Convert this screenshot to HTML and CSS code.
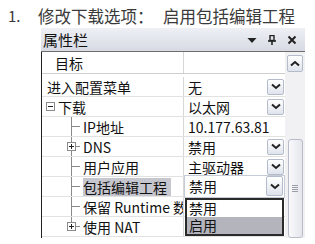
FILE: index.html
```html
<!DOCTYPE html>
<html lang="zh">
<head>
    <meta charset="UTF-8">
    <meta name="viewport" content="width=device-width, initial-scale=1.0">
    <title>属性栏</title>
    <link rel="stylesheet" href="styles.css">
</head>
<body>
    <p class="step"><span class="num">1.</span><span class="what">修改下载选项：</span><span class="how">启用包括编辑工程</span></p>

    <div class="panel">
        <div class="panel-head">
            <span class="panel-title">属性栏</span>
            <span class="head-icons">
                <svg width="10" height="10" viewBox="0 0 10 10"><polygon points="0.5,3 9.5,3 5,8" fill="#222"/></svg>
                <svg width="10" height="10" viewBox="0 0 10 10"><rect x="3" y="0.5" width="4" height="5" fill="none" stroke="#222" stroke-width="1.4"/><line x1="1" y1="6" x2="9" y2="6" stroke="#222" stroke-width="1.6"/><line x1="5" y1="6" x2="5" y2="10" stroke="#222" stroke-width="1.6"/></svg>
                <svg width="10" height="10" viewBox="0 0 10 10"><path d="M1.5 1.5 L8.5 8.5 M8.5 1.5 L1.5 8.5" stroke="#222" stroke-width="2"/></svg>
            </span>
        </div>

        <div class="panel-body">
            <div class="grid">
                <div class="row row-top">
                    <div class="label">目标</div>
                    <div class="value"></div>
                </div>
                <div class="row row-first">
                    <div class="label">进入配置菜单</div>
                    <div class="value">无<span class="drop"><svg width="10" height="7" viewBox="0 0 10 7"><path d="M1 1.5 L5 5 L9 1.5" fill="none" stroke="#222" stroke-width="2"/></svg></span></div>
                </div>
                <div class="row">
                    <div class="label lvl0"><svg class="box" width="9" height="9" viewBox="0 0 9 9"><rect x="0.5" y="0.5" width="8" height="8" fill="#fff" stroke="#8a8a8a"/><line x1="2" y1="4.5" x2="7" y2="4.5" stroke="#222"/></svg>下载</div>
                    <div class="value">以太网<span class="drop"><svg width="10" height="7" viewBox="0 0 10 7"><path d="M1 1.5 L5 5 L9 1.5" fill="none" stroke="#222" stroke-width="2"/></svg></span></div>
                </div>
                <div class="row">
                    <div class="label lvl1"><span class="twig"></span>IP地址</div>
                    <div class="value">10.177.63.81</div>
                </div>
                <div class="row">
                    <div class="label lvl1"><span class="twig twig-box"><svg class="box" width="9" height="9" viewBox="0 0 9 9"><rect x="0.5" y="0.5" width="8" height="8" fill="#fff" stroke="#8a8a8a"/><line x1="2" y1="4.5" x2="7" y2="4.5" stroke="#222"/><line x1="4.5" y1="2" x2="4.5" y2="7" stroke="#222"/></svg></span>DNS</div>
                    <div class="value">禁用<span class="drop"><svg width="10" height="7" viewBox="0 0 10 7"><path d="M1 1.5 L5 5 L9 1.5" fill="none" stroke="#222" stroke-width="2"/></svg></span></div>
                </div>
                <div class="row">
                    <div class="label lvl1"><span class="twig"></span>用户应用</div>
                    <div class="value">主驱动器<span class="drop"><svg width="10" height="7" viewBox="0 0 10 7"><path d="M1 1.5 L5 5 L9 1.5" fill="none" stroke="#222" stroke-width="2"/></svg></span></div>
                </div>
                <div class="row">
                    <div class="label lvl1"><span class="twig"></span><span class="selected">包括编辑工程</span></div>
                    <div class="value combo">
                        <div class="combo-box">禁用<span class="drop drop-big"><svg width="10" height="7" viewBox="0 0 10 7"><path d="M1 1.5 L5 5 L9 1.5" fill="none" stroke="#222" stroke-width="2"/></svg></span></div>
                        <div class="combo-list">
                            <div class="option">禁用</div>
                            <div class="option picked">启用</div>
                        </div>
                    </div>
                </div>
                <div class="row">
                    <div class="label lvl1"><span class="twig"></span>保留 Runtime 数</div>
                    <div class="value"></div>
                </div>
                <div class="row">
                    <div class="label lvl1"><span class="twig twig-box twig-last"><svg class="box" width="9" height="9" viewBox="0 0 9 9"><rect x="0.5" y="0.5" width="8" height="8" fill="#fff" stroke="#8a8a8a"/><line x1="2" y1="4.5" x2="7" y2="4.5" stroke="#222"/><line x1="4.5" y1="2" x2="4.5" y2="7" stroke="#222"/></svg></span>使用 NAT</div>
                    <div class="value"></div>
                </div>
            </div>

            <div class="scrollbar">
                <div class="sb-btn"><svg width="10" height="7" viewBox="0 0 10 7"><path d="M1 5.5 L5 2 L9 5.5" fill="none" stroke="#222" stroke-width="2"/></svg></div>
                <div class="sb-track"></div>
                <div class="sb-thumb"><span class="grip"></span></div>
            </div>
        </div>
    </div>
</body>
</html>
```

FILE: styles.css
```css
body {
    margin: 0;
    background: #ffffff;
    font-family: "Noto Sans CJK SC", "Noto Sans", sans-serif;
    color: #111;
}
.step {
    margin: 0;
    padding: 3px 0 0 8px;
    height: 25px;
    display: flex;
    align-items: center;
    font-size: 16.5px;
    line-height: 20px;
    color: #3a3a3a;
}
.num {
    width: 30px;
    font-size: 15px;
}
.what {
    width: 125px;
}
.panel {
    margin-left: 41px;
    width: 264px;
}
.panel-head {
    height: 24px;
    box-sizing: border-box;
    display: flex;
    align-items: center;
    justify-content: space-between;
    padding: 0 8px 0 2px;
    background: linear-gradient(#eef0f5, #d7dae3);
    border-bottom: 1px solid #6e6e6e;
}
.panel-title {
    font-size: 15px;
    line-height: 18px;
    color: #111;
}
.head-icons {
    display: flex;
    gap: 10px;
    align-items: center;
}
.head-icons svg {
    display: block;
}
.panel-body {
    display: flex;
    height: 186px;
}
.grid {
    width: 244px;
    border-left: 1px solid #222;
    box-sizing: border-box;
    font-size: 14px;
}
.row {
    display: flex;
    height: 20px;
    box-sizing: border-box;
    border-bottom: 1px solid #e2e2e2;
}
.row-top {
    height: 22px;
    border-bottom: 1px solid #cfcfcf;
}
.row-first {
    height: 23px;
    padding-top: 3px;
}
.label {
    width: 142px;
    display: flex;
    align-items: center;
    padding-left: 5px;
    box-sizing: border-box;
    white-space: nowrap;
    overflow: hidden;
    border-right: 1px solid #d6d6d6;
}
.row-top .label {
    padding-left: 13px;
}
.lvl0 {
    padding-left: 4px;
}
.lvl0 .box {
    margin-right: 3px;
}
.lvl1 {
    padding-left: 24px;
}
.twig {
    width: 14px;
    height: 100%;
    margin-right: 3px;
    flex-shrink: 0;
    background:
        linear-gradient(#8a8a8a, #8a8a8a) 5px 0 / 1px 100% no-repeat,
        linear-gradient(#8a8a8a, #8a8a8a) 5px 50% / 9px 1px no-repeat;
    display: flex;
    align-items: center;
}
.twig-box .box {
    display: block;
    margin-left: 1px;
}
.twig-last {
    background:
        linear-gradient(#8a8a8a, #8a8a8a) 5px 0 / 1px 50% no-repeat,
        linear-gradient(#8a8a8a, #8a8a8a) 10px 50% / 4px 1px no-repeat;
}
.selected {
    background: #c6c6ce;
    line-height: 18px;
    padding-right: 4px;
}
.value {
    width: 101px;
    display: flex;
    align-items: center;
    justify-content: space-between;
    padding: 0 1px 0 4px;
    box-sizing: border-box;
    white-space: nowrap;
    overflow: visible;
}
.drop {
    width: 17px;
    height: 16px;
    box-sizing: border-box;
    display: flex;
    align-items: center;
    justify-content: center;
    border: 1px solid #b4bccb;
    border-radius: 2px;
    background: linear-gradient(#ffffff, #dfe3ec);
}
.drop-big {
    height: 20px;
}
.combo {
    position: relative;
    padding: 0;
}
.combo-box {
    flex: 1;
    height: 21px;
    margin-top: -1px;
    display: flex;
    align-items: center;
    justify-content: space-between;
    padding: 0 1px 0 4px;
    border: 1px solid #c5ccd8;
    background: #fff;
}
.combo-list {
    position: absolute;
    top: 21px;
    left: 1px;
    width: 99px;
    box-sizing: border-box;
    border: 2px solid #2a2a2a;
    background: #fff;
    z-index: 2;
}
.option {
    height: 17px;
    line-height: 17px;
    padding-left: 2px;
}
.option.picked {
    background: #b3b4bc;
}
.scrollbar {
    width: 20px;
    background: #f1f1f4;
    display: flex;
    flex-direction: column;
    align-items: center;
    padding-top: 3px;
    box-sizing: border-box;
}
.sb-btn {
    width: 16px;
    height: 17px;
    box-sizing: border-box;
    border: 1px solid #b4bccb;
    border-radius: 2px;
    background: linear-gradient(#ffffff, #dfe3ec);
    display: flex;
    align-items: center;
    justify-content: center;
}
.sb-track {
    height: 67px;
}
.sb-thumb {
    width: 15px;
    flex: 1;
    box-sizing: border-box;
    border: 1px solid #b8bcc8;
    border-radius: 3px;
    background: linear-gradient(to right, #fafafc, #e4e6ec);
    display: flex;
    align-items: center;
    justify-content: center;
}
.grip {
    width: 6px;
    height: 7px;
    background: repeating-linear-gradient(#9a9ea8 0 1px, transparent 1px 2px);
}
```
